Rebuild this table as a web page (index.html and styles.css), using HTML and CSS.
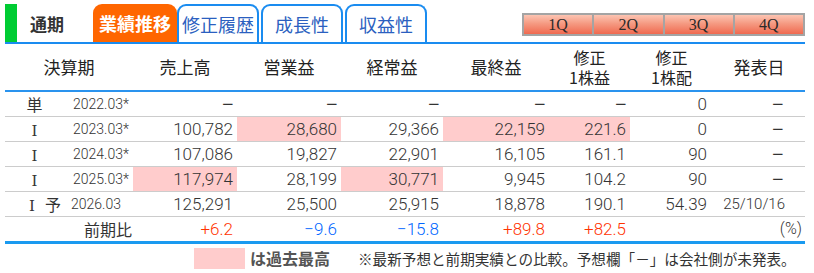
FILE: index.html
```html
<!DOCTYPE html>
<html lang="ja">
<head>
<meta charset="utf-8">
<title>業績推移</title>
<link rel="stylesheet" href="styles.css">
</head>
<body>
<div class="wrap">
  <div class="tabbar">
    <div class="label"><span class="greenbar"></span><span class="label-text">通期</span></div>
    <div class="tab tab-active">業績推移</div>
    <div class="tab">修正履歴</div>
    <div class="tab">成長性</div>
    <div class="tab">収益性</div>
    <div class="qbtns">
      <div class="qbtn">1Q</div>
      <div class="qbtn">2Q</div>
      <div class="qbtn">3Q</div>
      <div class="qbtn">4Q</div>
    </div>
  </div>
  <table class="perf">
    <colgroup>
      <col class="c0"><col class="c1"><col class="c2"><col class="c3"><col class="c4"><col class="c5"><col class="c6"><col class="c7"><col class="c8">
    </colgroup>
    <thead>
      <tr>
        <th colspan="2">決算期</th>
        <th>売上高</th>
        <th>営業益</th>
        <th>経常益</th>
        <th>最終益</th>
        <th class="two"><span class="hl">修正</span><span class="hl">1株益</span></th>
        <th class="two"><span class="hl">修正</span><span class="hl">1株配</span></th>
        <th>発表日</th>
      </tr>
    </thead>
    <tbody>
      <tr>
        <td class="typ">単</td><td class="date">2022.03*</td>
        <td class="num dash">−</td><td class="num dash">−</td><td class="num dash">−</td><td class="num dash">−</td><td class="num dash">−</td><td class="num div">0</td><td class="pub dash">−</td>
      </tr>
      <tr>
        <td class="typ"><span class="roman">Ⅰ</span></td><td class="date">2023.03*</td>
        <td class="num">100,782</td><td class="num hi">28,680</td><td class="num">29,366</td><td class="num hi">22,159</td><td class="num hi">221.6</td><td class="num div">0</td><td class="pub dash">−</td>
      </tr>
      <tr>
        <td class="typ"><span class="roman">Ⅰ</span></td><td class="date">2024.03*</td>
        <td class="num">107,086</td><td class="num">19,827</td><td class="num">22,901</td><td class="num">16,105</td><td class="num">161.1</td><td class="num div">90</td><td class="pub dash">−</td>
      </tr>
      <tr>
        <td class="typ"><span class="roman">Ⅰ</span></td><td class="date">2025.03*</td>
        <td class="num hi">117,974</td><td class="num">28,199</td><td class="num hi">30,771</td><td class="num">9,945</td><td class="num">104.2</td><td class="num div">90</td><td class="pub dash">−</td>
      </tr>
      <tr>
        <td class="typ typ-fc"><span class="roman">Ⅰ</span><span class="yo">予</span></td><td class="date date-fc">2026.03</td>
        <td class="num">125,291</td><td class="num">25,500</td><td class="num">25,915</td><td class="num">18,878</td><td class="num">190.1</td><td class="num div">54.39</td><td class="pub pub-date">25/10/16</td>
      </tr>
      <tr class="ratio">
        <td></td><td class="ratio-label">前期比</td>
        <td class="num up">+6.2</td><td class="num down">−9.6</td><td class="num down">−15.8</td><td class="num up">+89.8</td><td class="num up">+82.5</td><td></td><td class="pct">(%)</td>
      </tr>
    </tbody>
  </table>
  <div class="foot">
    <span class="swatch"></span>
    <span class="foot-hi">は過去最高</span>
    <span class="foot-note">※最新予想と前期実績との比較。予想欄「－」は会社側が未発表。</span>
  </div>
</div>
</body>
</html>
```
FILE: styles.css
```css
html, body {
  margin: 0;
  padding: 0;
  background: #ffffff;
}
body {
  font-family: "Noto Sans CJK JP", "Noto Sans", sans-serif;
  color: #333333;
}
.wrap {
  width: 800px;
  margin-left: 5px;
  padding-top: 4px;
}
.tabbar {
  display: flex;
  align-items: stretch;
  height: 38px;
  border-bottom: 2px solid #1a8cf0;
}
.label {
  display: flex;
  align-items: center;
  width: 88px;
}
.greenbar {
  width: 12px;
  align-self: stretch;
  background: #00cc33;
}
.label-text {
  margin-left: 13px;
  font-size: 17px;
  font-weight: bold;
  color: #333333;
}
.tab {
  box-sizing: border-box;
  width: 82px;
  margin-right: 2px;
  display: flex;
  align-items: center;
  justify-content: center;
  border: 2px solid #1a8cf0;
  border-bottom: none;
  border-radius: 9px 9px 0 0;
  background: #ffffff;
  color: #2b5fc0;
  font-size: 18px;
  line-height: 1;
}
.tab-active {
  width: 84px;
  margin-right: 0;
  border: none;
  background: #ff6600;
  color: #ffffff;
  font-weight: bold;
}
.qbtns {
  margin-left: auto;
  margin-top: 9px;
  align-self: flex-start;
  display: flex;
  gap: 2px;
  width: 283px;
  height: 23px;
  box-sizing: border-box;
  border: 2px solid #a4a4a4;
  background: #a4a4a4;
}
.qbtn {
  flex: 1;
  display: flex;
  align-items: center;
  justify-content: center;
  background: linear-gradient(#fcc4b2, #f59a82 45%, #f06a50);
  font-family: "Liberation Serif", serif;
  font-size: 16px;
  color: #2a2a2a;
}
.perf {
  width: 800px;
  table-layout: fixed;
  border-collapse: collapse;
}
.c0 { width: 59px; }
.c1 { width: 69px; }
.c2 { width: 104px; }
.c3 { width: 104px; }
.c4 { width: 102px; }
.c5 { width: 106px; }
.c6 { width: 81px; }
.c7 { width: 83px; }
.c8 { width: 92px; }
.perf th {
  height: 46px;
  padding: 0;
  font-size: 17px;
  font-weight: normal;
  color: #222222;
  text-align: center;
  border-bottom: 2px solid #2a93ee;
  line-height: 20px;
}
.perf th.two {
  font-size: 16px;
}
.hl {
  display: block;
  line-height: 20px;
}
.perf td {
  height: 24px;
  padding: 0;
  border-bottom: 1px solid #cccccc;
  font-size: 16px;
  line-height: 18px;
  color: #333333;
  white-space: nowrap;
  vertical-align: middle;
}
.perf tr.ratio td {
  border-bottom: 3px solid #1a9af0;
}
.typ {
  text-align: center;
  color: #8a6a2c;
}
.roman {
  font-family: "DejaVu Serif", "Liberation Serif", serif;
  font-size: 15px;
  line-height: 1;
}
.typ-fc {
  text-align: left;
  padding-left: 24px !important;
}
.yo {
  margin-left: 10px;
}
.date {
  font-family: "Roboto", "Noto Sans", sans-serif;
  font-weight: 300;
  font-size: 14px !important;
  padding-left: 9px !important;
}
.date-fc {
  padding-left: 7px !important;
}
.num {
  font-family: "Roboto", "Noto Sans", sans-serif;
  font-weight: 300;
  font-size: 17px !important;
  text-align: right;
  padding-right: 4px !important;
}
.num.div {
  padding-right: 6px !important;
}
.perf td.dash {
  font-family: "DejaVu Sans", sans-serif;
  font-weight: normal;
  font-size: 15px !important;
  padding-right: 3px !important;
}
.perf td.pub.dash {
  padding-right: 21px !important;
}
.hi {
  background: #ffcccc;
}
.pub {
  font-family: "Roboto", "Noto Sans", sans-serif;
  font-weight: 300;
  text-align: right;
  padding-right: 22px !important;
}
.pub-date {
  font-size: 15px !important;
  padding-right: 20px !important;
}
.ratio-label {
  text-align: right;
  padding-right: 1px !important;
}
.up {
  color: #ff3300 !important;
}
.down {
  color: #0066ff !important;
}
.pct {
  font-family: "Roboto", "Noto Sans", sans-serif;
  font-weight: 300;
  text-align: right;
  padding-right: 3px !important;
}
.foot {
  display: flex;
  align-items: center;
  height: 28px;
  padding-left: 189px;
  white-space: nowrap;
}
.swatch {
  flex: none;
  width: 51px;
  height: 21px;
  background: #ffcccc;
}
.foot-hi {
  flex: none;
  margin-left: 5px;
  font-size: 16px;
  color: #555555;
  font-weight: bold;
}
.foot-note {
  flex: none;
  margin-left: 28px;
  font-size: 14.6px;
  color: #333333;
}
```
